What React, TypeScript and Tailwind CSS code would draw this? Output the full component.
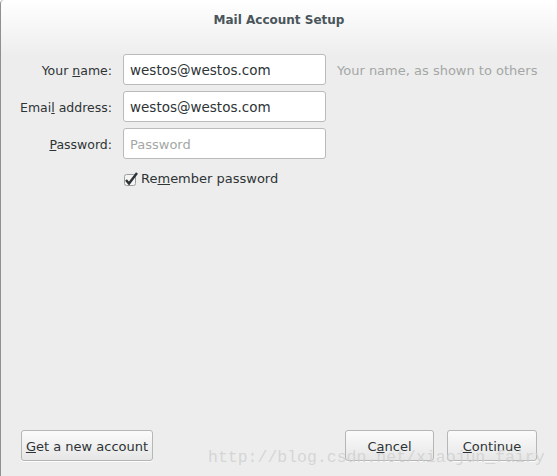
const font = { fontFamily: '"DejaVu Sans", sans-serif' };

function Field({ value, placeholder }: { value?: string; placeholder?: string }) {
  return (
    <div className="h-[31px] w-[203px] rounded-[3px] border border-[#b9bbb8] bg-white px-[6px] pt-[2px] flex items-center text-[13.5px]">
      {value ? (
        <span className="text-[#2e3436]">{value}</span>
      ) : (
        <span className="text-[#a4a7a6] text-[13px]">{placeholder}</span>
      )}
    </div>
  );
}

function Btn({ children, className = '' }: { children: React.ReactNode; className?: string }) {
  return (
    <button
      className={`h-[31px] pt-[3px] rounded-[3px] border border-[#b5b7b4] bg-gradient-to-b from-[#fbfbfb] to-[#e6e6e6] text-[13px] text-[#2e3436] flex items-center justify-center shadow-[0_1px_0_rgba(255,255,255,0.8)] ${className}`}
    >
      {children}
    </button>
  );
}

export default function App() {
  return (
    <div
      className="relative w-[557px] h-[476px] overflow-hidden flex flex-col bg-gradient-to-b from-white from-0% to-[#ededed] to-[12%] border-l border-[#8f918e] rounded-tl-[4px]"
      style={font}
    >
      <div className="h-[38px] pt-[2px] flex items-center justify-center text-[12px] font-bold text-[#4a555b]">
        Mail Account Setup
      </div>

      <div className="mt-[16px] grid grid-cols-[111px_203px_auto] gap-x-[11px] gap-y-[6px] items-center text-[13px] text-[#2e3436]">
        <div className="text-right text-[12.5px] pt-[3px]">
          Your <u>n</u>ame:
        </div>
        <Field value="westos@westos.com" />
        <div className="text-[#a4a7a6] pt-[3px]">Your name, as shown to others</div>

        <div className="text-right text-[12.5px] pt-[3px]">
          Emai<u>l</u> address:
        </div>
        <Field value="westos@westos.com" />
        <div />

        <div className="text-right text-[12.5px] pt-[3px]">
          <u>P</u>assword:
        </div>
        <Field placeholder="Password" />
        <div />

        <div />
        <label className="mt-[2px] h-[24px] flex items-center">
          <svg width="17" height="14" viewBox="0 0 17 14" className="ml-[1px]">
            <rect x="0.5" y="2.5" width="11" height="11" rx="2" fill="#f4f4f4" stroke="#9c9e9b" />
            <path d="M2 8 L5 11.5 L13 1" fill="none" stroke="#2e3436" strokeWidth="2.4" />
          </svg>
          <span>
            Re<u>m</u>ember password
          </span>
        </label>
        <div />
      </div>

      <div className="flex-1" />

      <div className="flex items-center px-[20px] pb-[15px]">
        <Btn className="w-[132px]">
          <span>
            <u>G</u>et a new account
          </span>
        </Btn>
        <div className="flex-1" />
        <Btn className="w-[89px]">
          <span>
            C<u>a</u>ncel
          </span>
        </Btn>
        <Btn className="w-[90px] ml-[13px]">
          <span>
            <u>C</u>ontinue
          </span>
        </Btn>
      </div>

      <div
        className="absolute left-[207px] top-[450px] text-[16.5px] leading-none text-[#cfcfcf]/80 pointer-events-none whitespace-nowrap"
        style={{ fontFamily: '"Liberation Mono", monospace' }}
      >
        http://blog.csdn.net/xiaojun_fairy
      </div>
    </div>
  );
}
